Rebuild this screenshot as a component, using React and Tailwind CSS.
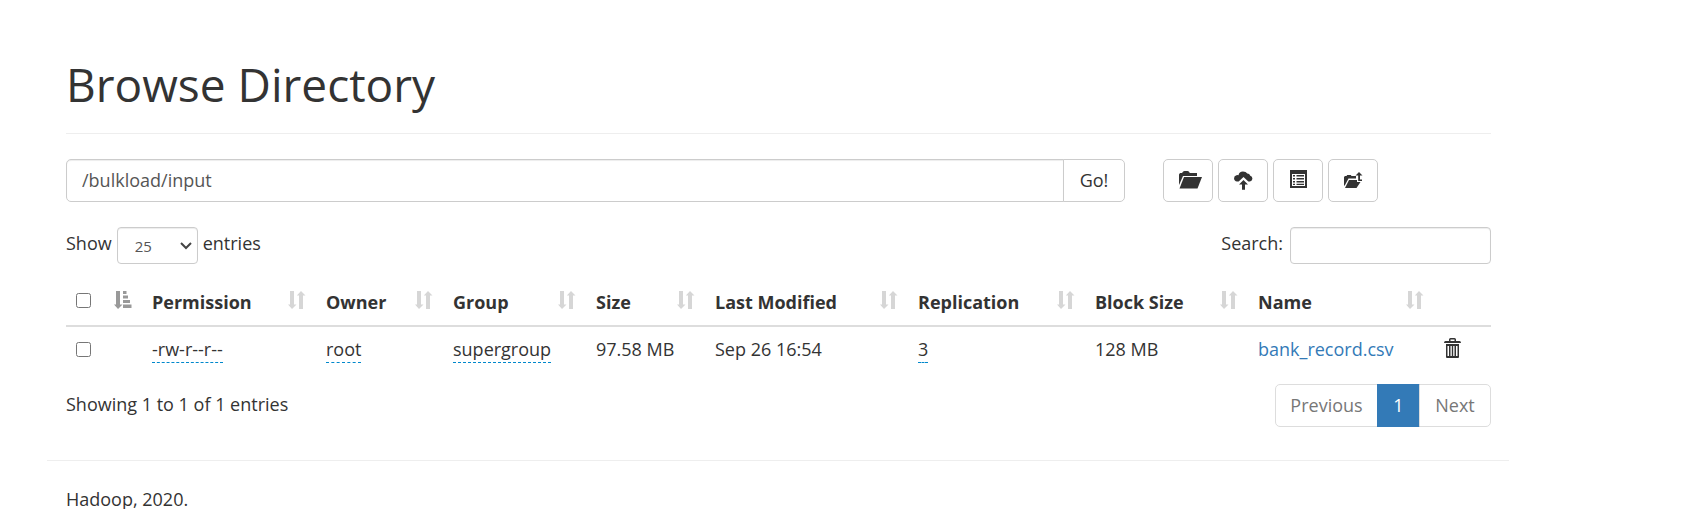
import { useState } from "react";

const INPUT =
  "border border-[#ccc] bg-white text-[#555] shadow-[inset_0_1px_1px_rgba(0,0,0,0.075)] outline-none focus:border-[#66afe9]";
const TOOL =
  "flex h-[43px] w-[50px] items-center justify-center rounded-[5px] border border-[#ccc] bg-white text-[#333] hover:bg-[#e6e6e6]";

function FolderOpenIcon() {
  return (
    <svg className="h-[20px] w-[28px]" viewBox="-5 0 28 20" fill="currentColor" aria-hidden="true">
      <path d="M0 14V3.500L1 2H3L4 .8Q4.500 0 5.500 0H8.500Q9.500 0 10 .8L10.800 2H18V5H4L0.500 13Z" />
      <path d="M5 6H23L18.500 17.500H0.500Z" />
    </svg>
  );
}

function CloudUploadIcon() {
  return (
    <svg className="h-[19px] w-[19px]" viewBox="0 0 19 19" fill="currentColor" aria-hidden="true">
      <path d="M3 10.500A3.200 3.200 0 0 1 2.500 4.200Q3.200 3.800 4.500 4.200A4.500 4.500 0 0 1 9 0.500Q12 0.500 13.300 2.600A3.400 3.400 0 0 1 16.300 4.700A3 3 0 0 1 16 10.500H14.300L9.500 6L4.700 10.500Z" />
      <path d="M9.500 9L14 13.500H11V18.800H8V13.500H5Z" />
    </svg>
  );
}

function ListIcon() {
  return (
    <svg className="h-[21px] w-[17px]" viewBox="0 0 17 21" fill="currentColor" aria-hidden="true">
      <path fillRule="evenodd" d="M0 0H17V18H0ZM2 4V16H15V4Z" />
      <path d="M3 5H5V6.500H3ZM6.500 5H14V6.500H6.500ZM3 8H5V9.500H3ZM6.500 8H14V9.500H6.500ZM3 11H5V12.500H3ZM6.500 11H14V12.500H6.500ZM3 13.700H5V15H3ZM6.500 13.700H14V15H6.500Z" />
    </svg>
  );
}

function FolderUpIcon() {
  return (
    <svg className="h-[17px] w-[19px]" viewBox="0 0 19 17" fill="currentColor" aria-hidden="true">
      <path d="M0 14V5L1 4H2.500L3.200 3H6.800L7.500 4H12V6.500H4.500L1 13Z" />
      <path d="M5 8H13V10H16.500L12.500 16H1Z" />
      <path d="M15 0L18.500 3.500H16V7.500H18V9H14.200V3.500H11.500Z" />
    </svg>
  );
}

function TrashIcon() {
  return (
    <svg className="h-[20px] w-[17px]" viewBox="0 0 17 20" fill="currentColor" aria-hidden="true">
      <path fillRule="evenodd" d="M5 3V1.500Q5 0 6.500 0H10.500Q12 0 12 1.500V3H15.500Q17 3 17 5H0Q0 3 1.500 3ZM6.500 3H10.500V1.500H6.500Z" />
      <path fillRule="evenodd" d="M2 6H15V19Q15 20 14 20H3Q2 20 2 19ZM3.500 8V18H5V8ZM6.500 8V18H7.800V8ZM9.200 8V18H10.500V8ZM12 8V18H13.500V8Z" />
    </svg>
  );
}

function SortIcon({ active }) {
  return active ? (
    <svg className="h-[18px] w-[18px] text-[#999]" viewBox="0 0 18 18" fill="currentColor" aria-hidden="true">
      <path d="M2 0H6V13.500H8.500L4 18L0 13.500H2Z" />
      <path d="M9 0H12.500V3H9ZM9 4.500H14V7.500H9ZM9 9H16V12H9ZM9 13.500H17.500V17H9Z" />
    </svg>
  ) : (
    <svg className="h-[18px] w-[18px] text-[#d6d6d6]" viewBox="0 0 18 18" fill="currentColor" aria-hidden="true">
      <path d="M2 0H6V13.500H8.500L4 18L0 13.500H2Z" />
      <path d="M11 18H15V4.500H17.500L13 0L8.800 4.500H11Z" />
    </svg>
  );
}

const COLUMNS = ["Permission", "Owner", "Group", "Size", "Last Modified", "Replication", "Block Size", "Name"];

function Editable({ children }) {
  return (
    <a href="#edit" className="inline-block border-b border-dashed border-[#08c] leading-[25px]">
      {children}
    </a>
  );
}

export default function App() {
  const [path, setPath] = useState("/bulkload/input");
  return (
    <div className="bg-white pr-[175px] pl-[47px] font-['Open_Sans','Noto_Sans',sans-serif] text-[18px] leading-[28px] text-[#333]">
      <main className="pt-[54px] pr-[18px] pl-[19px]">
        <h1 className="border-b border-[#eee] pb-[19px] text-[46px] leading-[60px]">Browse Directory</h1>

        <div className="mt-[25px] flex items-center">
          <form className="flex flex-1" onSubmit={(e) => e.preventDefault()}>
            <input
              aria-label="Directory path"
              className={`h-[43px] min-w-0 flex-1 rounded-l-[5px] px-[15px] pb-[2px] ${INPUT}`}
              value={path}
              onChange={(e) => setPath(e.target.value)}
            />
            <button className="-ml-px h-[43px] w-[62px] rounded-r-[5px] border border-[#ccc] bg-white pb-[2px] hover:bg-[#e6e6e6]">
              Go!
            </button>
          </form>
          <div className="ml-[38px] flex w-[328px] gap-[5px]">
            <button aria-label="Create directory" className={TOOL}><FolderOpenIcon /></button>
            <button aria-label="Upload files" className={TOOL}><CloudUploadIcon /></button>
            <button aria-label="Cut and paste" className={TOOL}><ListIcon /></button>
            <button aria-label="Parent directory" className={TOOL}><FolderUpIcon /></button>
          </div>
        </div>

        <div className="mt-[25px] flex justify-between">
          <label className="flex gap-[5px]">
            <span className="leading-[33px]">Show</span>
            <span className="relative">
              <select defaultValue="25" className={`h-[37px] w-[81px] appearance-none rounded-[4px] pl-[17px] text-[15px] ${INPUT}`}>
                <option>25</option>
                <option>50</option>
                <option>100</option>
              </select>
              <svg className="pointer-events-none absolute top-[15px] right-[6px] h-[8px] w-[12px]" viewBox="0 0 12 8" fill="none" stroke="#444" strokeWidth="2" aria-hidden="true">
                <path d="M1 1L6 6L11 1" />
              </svg>
            </span>
            <span className="leading-[33px]">entries</span>
          </label>
          <label className="flex gap-[7px]">
            <span className="leading-[33px]">Search:</span>
            <input type="search" className={`h-[37px] w-[201px] rounded-[4px] px-[12px] text-[15px] ${INPUT}`} />
          </label>
        </div>

        <table className="mt-[12px] w-full table-fixed border-collapse text-left">
          <colgroup>
            <col className="w-[76px]" />
            <col className="w-[174px]" />
            <col className="w-[127px]" />
            <col className="w-[143px]" />
            <col className="w-[119px]" />
            <col className="w-[203px]" />
            <col className="w-[177px]" />
            <col className="w-[163px]" />
            <col className="w-[186px]" />
            <col className="w-[57px]" />
          </colgroup>
          <thead>
            <tr className="h-[50px] border-b-2 border-[#ddd]">
              <th className="px-[10px] pb-[1px]">
                <div className="flex items-center justify-between">
                  <input type="checkbox" aria-label="Select all" className="size-[15px]" />
                  <SortIcon active />
                </div>
              </th>
              {COLUMNS.map((name) => (
                <th key={name} className="px-[10px] pb-[1px] font-bold whitespace-nowrap">
                  <div className="flex items-center justify-between">
                    <span className="h-[25px]">{name}</span>
                    <SortIcon />
                  </div>
                </th>
              ))}
              <th />
            </tr>
          </thead>
          <tbody>
            <tr className="h-[46px] whitespace-nowrap">
              <td className="px-[10px] pb-[1px]">
                <input type="checkbox" aria-label="Select bank_record.csv" className="block size-[15px]" />
              </td>
              <td className="px-[10px] pb-[1px]"><Editable>-rw-r--r--</Editable></td>
              <td className="px-[10px] pb-[1px]"><Editable>root</Editable></td>
              <td className="px-[10px] pb-[1px]"><Editable>supergroup</Editable></td>
              <td className="px-[10px] pb-[1px]">97.58 MB</td>
              <td className="px-[10px] pb-[1px]">Sep 26 16:54</td>
              <td className="px-[10px] pb-[1px]"><Editable>3</Editable></td>
              <td className="px-[10px] pb-[1px]">128 MB</td>
              <td className="px-[10px] pb-[1px]"><a href="#bank_record.csv" className="text-[#337ab7] hover:underline">bank_record.csv</a></td>
              <td className="px-[10px] pb-[3px]">
                <button aria-label="Delete bank_record.csv" className="block"><TrashIcon /></button>
              </td>
            </tr>
          </tbody>
        </table>

        <div className="mt-[12px] flex justify-between">
          <p className="pt-[6px]">Showing 1 to 1 of 1 entries</p>
          <nav aria-label="Pages" className="flex h-[43px] text-[#777]">
            <button className="w-[103px] rounded-l-[5px] border border-[#ddd] pb-[2px]">Previous</button>
            <button aria-current="page" className="-ml-px w-[43px] bg-[#337ab7] pb-[2px] text-white">1</button>
            <button className="-ml-px w-[72px] rounded-r-[5px] border border-[#ddd] pb-[2px]">Next</button>
          </nav>
        </div>
      </main>
      <footer className="mt-[33px] border-t border-[#eee] px-[19px] pt-[24px]">
        <p>Hadoop, 2020.</p>
      </footer>
    </div>
  );
}
